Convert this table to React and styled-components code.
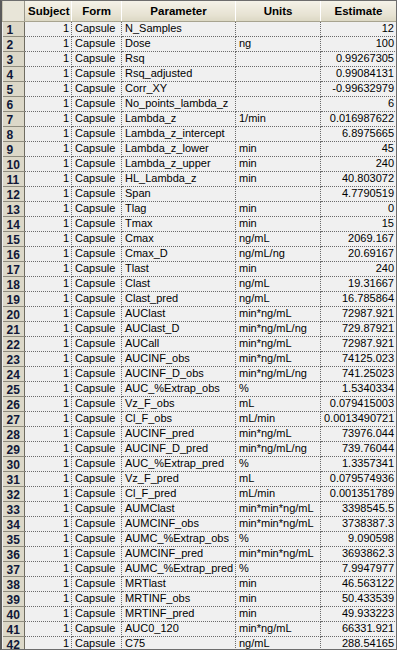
import React from "react"
import styled, { createGlobalStyle } from "styled-components"

const GlobalStyle = createGlobalStyle`
body {
  margin: 0;
  background: #ffffff;
  font-family: "Liberation Sans", Arial, sans-serif;
}
`

const rows = [
  ["N_Samples", "", "12"],
  ["Dose", "ng", "100"],
  ["Rsq", "", "0.99267305"],
  ["Rsq_adjusted", "", "0.99084131"],
  ["Corr_XY", "", "-0.99632979"],
  ["No_points_lambda_z", "", "6"],
  ["Lambda_z", "1/min", "0.016987622"],
  ["Lambda_z_intercept", "", "6.8975665"],
  ["Lambda_z_lower", "min", "45"],
  ["Lambda_z_upper", "min", "240"],
  ["HL_Lambda_z", "min", "40.803072"],
  ["Span", "", "4.7790519"],
  ["Tlag", "min", "0"],
  ["Tmax", "min", "15"],
  ["Cmax", "ng/mL", "2069.167"],
  ["Cmax_D", "ng/mL/ng", "20.69167"],
  ["Tlast", "min", "240"],
  ["Clast", "ng/mL", "19.31667"],
  ["Clast_pred", "ng/mL", "16.785864"],
  ["AUClast", "min*ng/mL", "72987.921"],
  ["AUClast_D", "min*ng/mL/ng", "729.87921"],
  ["AUCall", "min*ng/mL", "72987.921"],
  ["AUCINF_obs", "min*ng/mL", "74125.023"],
  ["AUCINF_D_obs", "min*ng/mL/ng", "741.25023"],
  ["AUC_%Extrap_obs", "%", "1.5340334"],
  ["Vz_F_obs", "mL", "0.079415003"],
  ["Cl_F_obs", "mL/min", "0.0013490721"],
  ["AUCINF_pred", "min*ng/mL", "73976.044"],
  ["AUCINF_D_pred", "min*ng/mL/ng", "739.76044"],
  ["AUC_%Extrap_pred", "%", "1.3357341"],
  ["Vz_F_pred", "mL", "0.079574936"],
  ["Cl_F_pred", "mL/min", "0.001351789"],
  ["AUMClast", "min*min*ng/mL", "3398545.5"],
  ["AUMCINF_obs", "min*min*ng/mL", "3738387.3"],
  ["AUMC_%Extrap_obs", "%", "9.090598"],
  ["AUMCINF_pred", "min*min*ng/mL", "3693862.3"],
  ["AUMC_%Extrap_pred", "%", "7.9947977"],
  ["MRTlast", "min", "46.563122"],
  ["MRTINF_obs", "min", "50.433539"],
  ["MRTINF_pred", "min", "49.933223"],
  ["AUC0_120", "min*ng/mL", "66331.921"],
  ["C75", "ng/mL", "288.54165"],
]

const Frame = styled.div`
  width: 397px;
  height: 650px;
  box-sizing: border-box;
  border: 1px solid #6d6d6d;
  border-left: 2px solid #5a5a5a;
  background: #f0f0f0;
  overflow: hidden;
`

const Grid = styled.table`
  border-collapse: collapse;
  table-layout: fixed;
  width: 394px;
  font-size: 11px;
  color: #000;
`

const HeadCell = styled.th`
  height: 20px;
  padding: 0 3px;
  box-sizing: border-box;
  font-weight: bold;
  font-size: 11.5px;
  text-align: center;
  white-space: nowrap;
  background: linear-gradient(#f4f2e8, #e6e2d2 70%, #dcd8c4);
  border-right: 1px solid #ffffff;
  border-left: 1px solid #c9c5b2;
  border-bottom: 1px solid #a8a490;
  overflow: hidden;
`

const Corner = styled(HeadCell)`
  background: #e8e5d8;
  border-right: 1px solid #9a978a;
`

const RowHead = styled.td`
  height: 15px;
  padding: 0 0 0 4px;
  box-sizing: border-box;
  font-size: 12px;
  font-weight: bold;
  color: #101838;
  line-height: 12px;
  vertical-align: bottom;
  background: #dcd8c8;
  border-top: 1px solid #f6f4ec;
  border-bottom: 1px solid #8f8c7e;
  border-right: 1px solid #6f6c60;
  overflow: hidden;
`

const Cell = styled.td`
  height: 15px;
  padding: 0 2px 0 3px;
  box-sizing: border-box;
  line-height: 13px;
  white-space: nowrap;
  overflow: hidden;
  text-align: ${(p) => (p.$right ? "right" : "left")};
  border-bottom: 1px dotted #6a6a6a;
  border-right: 1px dotted #6a6a6a;
  background: #f0f0f0;
`

function App() {
  return (
    <>
      <GlobalStyle />
      <Frame>
        <Grid>
          <colgroup>
            <col style={{ width: 22 }} />
            <col style={{ width: 47 }} />
            <col style={{ width: 50 }} />
            <col style={{ width: 114 }} />
            <col style={{ width: 85 }} />
            <col style={{ width: 76 }} />
          </colgroup>
          <thead>
            <tr>
              <Corner />
              <HeadCell>Subject</HeadCell>
              <HeadCell>Form</HeadCell>
              <HeadCell>Parameter</HeadCell>
              <HeadCell>Units</HeadCell>
              <HeadCell>Estimate</HeadCell>
            </tr>
          </thead>
          <tbody>
            {rows.map(([param, units, est], i) => (
              <tr key={param}>
                <RowHead>{i + 1}</RowHead>
                <Cell $right>1</Cell>
                <Cell>Capsule</Cell>
                <Cell>{param}</Cell>
                <Cell>{units}</Cell>
                <Cell $right>{est}</Cell>
              </tr>
            ))}
          </tbody>
        </Grid>
      </Frame>
    </>
  )
}

export default App
